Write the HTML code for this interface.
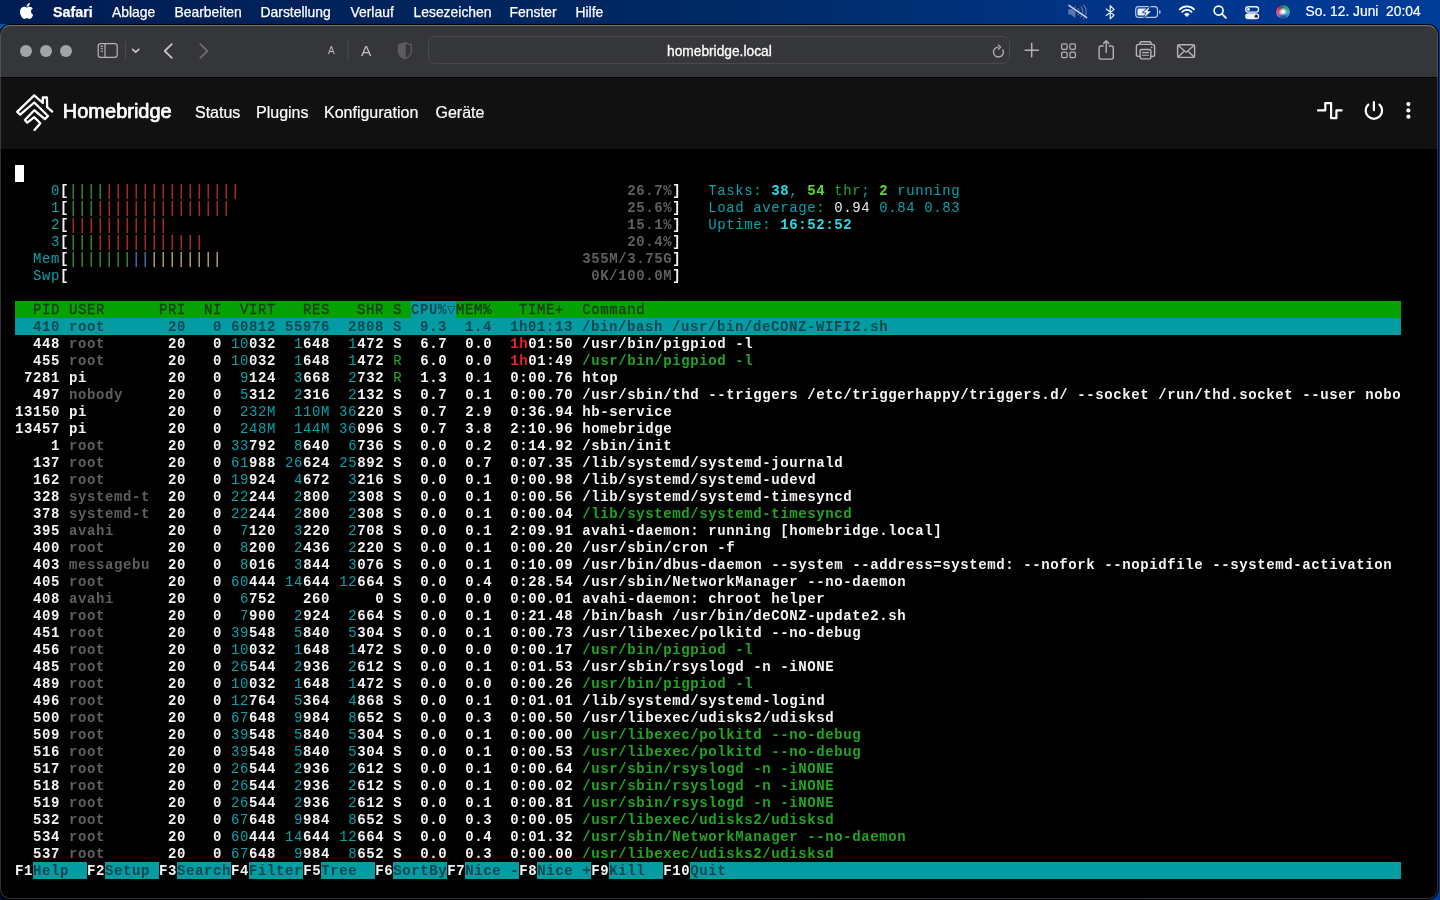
<!DOCTYPE html>
<html><head><meta charset="utf-8">
<style>
*{box-sizing:border-box}
html,body{margin:0;padding:0}
body{width:1440px;height:900px;overflow:hidden;position:relative;will-change:transform;background:linear-gradient(90deg,#001d54 0%,#00245c 30%,#002a64 50%,#00358a 80%,#003c98 100%);font-family:"Liberation Sans",sans-serif}
.mb{position:absolute;top:0;left:0;width:1440px;height:24px;color:#fff}
.mi{position:absolute;top:3.5px;font-size:13.9px;line-height:16px;white-space:nowrap;color:#fff;-webkit-text-stroke:.25px #fff}
.win{position:absolute;left:0;top:25px;width:1438px;height:874px;border-radius:10px;background:#000;overflow:hidden;box-shadow:0 0 0 1px rgba(0,0,0,.9)}
.winb{position:absolute;left:0;top:25px;width:1438px;height:874px;border-radius:10px;border:1px solid rgba(120,120,124,.42);border-top-color:rgba(160,160,164,.6);pointer-events:none}
.tb{position:absolute;left:0;top:0;width:1438px;height:53px;background:#35363a;border-bottom:1px solid #050505}
.nav{position:absolute;left:0;top:53px;width:1438px;height:71px;background:#111}
.ab{position:absolute;left:428px;top:11px;width:582px;height:28px;border:1px solid #4a4a4e;border-radius:7px;background:#36373b}
.nt{position:absolute;font-size:16px;line-height:19px;color:#fff;white-space:nowrap;-webkit-text-stroke:.2px #fff}
.term{position:absolute;left:15px;top:141px;font-family:"Liberation Mono",monospace;font-size:14px;letter-spacing:.6px;line-height:17px;white-space:pre;color:#f2f2f2}
.term div{height:17px}
.w{color:#f4f4f4;font-weight:bold}
.W{color:#ededed}
.c{color:#06a3ab}
.C{color:#2fd8e2;font-weight:bold}
.g{color:#22a822}
.gt{color:#20a620;font-weight:bold}
.G{color:#5fd83a;font-weight:bold}
.k{color:#5f5f5f;font-weight:bold}
.r{color:#e8231f;font-weight:bold}
.bg,.br,.bb,.by{display:inline-block;transform:scaleY(1.16)}.bg{color:#3caa3c}.br{color:#d63434}.bb{color:#5a82d0}.by{color:#d8c070}
.hg{color:#163f16;-webkit-text-stroke:.35px #163f16}
.hc{color:#0c4951;font-weight:bold}
.cur{background:#fff}
</style></head><body>
<div style="position:absolute;left:0;top:24px;width:14px;height:14px;background:radial-gradient(circle at 0 40%,#0b5ab0 0,#0a4a9a 50%,#062a6a 100%)"></div>
<div style="position:absolute;left:0;top:884px;width:14px;height:16px;background:#030c26"></div>
<div class="mb">
<svg style="position:absolute;left:20px;top:3px" width="12.8" height="16" viewBox="4 32 365 448" preserveAspectRatio="none"><path fill="#fff" d="M318.7 268.7c-.2-36.7 16.4-64.4 50-84.8-18.8-26.9-47.2-41.7-84.7-44.6-35.5-2.8-74.3 20.7-88.5 20.7-15 0-49.4-19.7-76.4-19.7C63.3 141.2 4 184.8 4 273.5q0 39.3 14.4 81.2c12.8 36.7 59 126.7 107.2 125.2 25.2-.6 43-17.9 75.8-17.9 31.8 0 48.3 17.9 76.4 17.9 48.6-.7 90.4-82.5 102.6-119.3-65.2-30.7-61.7-90-61.7-91.9zm-56.6-164.2c27.3-32.4 24.8-61.9 24-72.5-24.1 1.4-52 16.4-67.9 34.9-17.5 19.8-27.8 44.3-25.6 71.9 26.1 2 49.9-11.4 69.5-34.3z"/></svg>
<span class="mi" style="left:53px;font-weight:bold;font-size:14.3px;top:3.5px">Safari</span>
<span class="mi" style="left:112px">Ablage</span>
<span class="mi" style="left:174.5px">Bearbeiten</span>
<span class="mi" style="left:260.5px">Darstellung</span>
<span class="mi" style="left:350.5px">Verlauf</span>
<span class="mi" style="left:413.5px">Lesezeichen</span>
<span class="mi" style="left:509.5px">Fenster</span>
<span class="mi" style="left:575.5px">Hilfe</span>
<!-- muted speaker -->
<svg style="position:absolute;left:1060px;top:0" width="60" height="24" viewBox="1060 0 60 24"><path d="M1068.2 9.3h2.6l4.6-3.6v12.4l-4.6-3.6h-2.6z" fill="#5b78ae"/><path d="M1078.2 8.6c.7.9 1 1.9 1 3.1s-.3 2.2-1 3.1M1081 6.9c1.2 1.4 1.8 3 1.8 4.9s-.6 3.5-1.8 4.9M1083.7 5.2c1.7 1.9 2.6 4.1 2.6 6.6s-.9 4.7-2.6 6.6" stroke="#5877b0" stroke-width="1.2" fill="none" stroke-linecap="round"/><path d="M1069 5.4l17.6 12.2" stroke="#2a4a8a" stroke-width="2.6" stroke-linecap="round"/><path d="M1069 5.4l17.6 12.2" stroke="#dfe7f5" stroke-width="1.2" stroke-linecap="round"/>
<!-- bluetooth -->
<path d="M1106.3 9.1L1114 15.2 1110.2 18.9V5.7L1114 9.4 1106.3 15.4" stroke="#e6ecf8" stroke-width="1.25" fill="none" stroke-linejoin="round" stroke-linecap="round"/></svg>
<!-- battery -->
<svg style="position:absolute;left:1130px;top:0" width="70" height="24" viewBox="1130 0 70 24">
<rect x="1135.7" y="6.6" width="21.8" height="10.8" rx="2.9" stroke="#b9c8ec" stroke-width="1.15" fill="none"/>
<rect x="1137.5" y="8.4" width="9.5" height="7.2" rx="1.3" fill="#eceff8"/>
<rect x="1159" y="10.3" width="1.6" height="3.8" rx=".8" fill="#9db2e0"/>
<path d="M1149.9 6.4L1142.9 12.5H1146.5L1144.2 17.8 1151 11.3H1147.4Z" fill="#eceff8" stroke="#033a92" stroke-width="1.5" stroke-linejoin="round" paint-order="stroke"/>
<!-- wifi -->
<g stroke="#fff" stroke-width="1.8" fill="none" stroke-linecap="round">
<path d="M1179.7 9.4A10.2 10.2 0 0 1 1194.1 9.4"/>
<path d="M1182.2 11.9A6.6 6.6 0 0 1 1191.6 11.9"/>
</g>
<path d="M1186.9 16.6L1184.6 14.3A3.25 3.25 0 0 1 1189.2 14.3Z" fill="#fff" stroke="#fff" stroke-width=".9" stroke-linejoin="round"/>
</svg>
<!-- search -->
<svg style="position:absolute;left:1213px;top:4.5px" width="14" height="14" viewBox="0 0 14 14"><circle cx="5.6" cy="5.6" r="4.5" stroke="#fff" stroke-width="1.6" fill="none"/><path d="M8.9 8.9l4 4" stroke="#fff" stroke-width="1.8" stroke-linecap="round"/></svg>
<!-- control center -->
<svg style="position:absolute;left:1244.6px;top:5.6px" width="15" height="14" viewBox="0 0 15 14"><rect x=".75" y=".75" width="12.8" height="5.3" rx="2.65" stroke="#eef3ff" stroke-width="1.3" fill="none"/><circle cx="3.5" cy="3.4" r="1.35" fill="#fff"/><rect x=".1" y="7.2" width="14.1" height="6" rx="3" fill="#eef2fa"/><circle cx="11.2" cy="10.2" r="1.6" fill="#06245e"/></svg>
<!-- siri -->
<div style="position:absolute;left:1276.3px;top:4.9px;width:14px;height:14px;border-radius:50%;background:radial-gradient(circle at 50% 48%,#fff 0,rgba(240,250,255,.95) 14%,rgba(255,255,255,0) 42%),conic-gradient(from 0deg,#1f8a6a 0deg,#23a888 50deg,#3fb0c8 95deg,#3a8ad8 125deg,#1d4f8a 165deg,#2a5a9a 200deg,#8a6ac8 228deg,#d05a9a 262deg,#e04a7a 290deg,#a02a5a 325deg,#1f7a6a 358deg);box-shadow:0 0 0 .6px rgba(0,20,60,.6)"></div>
<span class="mi" style="left:1305.5px;top:4px;font-size:13.8px;-webkit-text-stroke:.2px #fff">So. 12. Juni&nbsp; 20:04</span>
</div>
<div class="win">
<div class="tb">
<svg style="position:absolute;left:0;top:-1px" width="1438" height="53">
<g fill="#a3a4a9"><circle cx="26" cy="27" r="6"/><circle cx="46" cy="27" r="6"/><circle cx="66" cy="27" r="6"/></g>
<g stroke="#b4b4b6" fill="none" stroke-width="1.2">
<rect x="98.2" y="19.7" width="19" height="13.6" rx="2.6"/>
<path d="M105 19.7v13.6"/>
</g>
<g stroke="#b4b4b6" stroke-width="1.1"><path d="M100.6 22.4h2.4M100.6 24.8h2.4M100.6 27.2h2.4"/></g>
<path d="M125.5 17.8v18.2" stroke="#4a4b4f" stroke-width="1"/>
<path d="M132.6 25.4l3.1 2.8 3.1-2.8" stroke="#c8c8ca" stroke-width="1.7" fill="none" stroke-linecap="round" stroke-linejoin="round"/>
<path d="M171.8 20.1L164.7 27l7.1 6.9" stroke="#c4c4c6" stroke-width="1.8" fill="none" stroke-linecap="round" stroke-linejoin="round"/>
<path d="M200.3 20.1L207.4 27l-7.1 6.9" stroke="#6c6c70" stroke-width="1.8" fill="none" stroke-linecap="round" stroke-linejoin="round"/>
<path d="M348 17v19" stroke="#4c4c50" stroke-width="1"/>
<path d="M405 18.9C407.5 19.9 409.6 20.5 411.4 20.7V26.2C411.4 30.6 408.7 33.3 405 34.6C401.3 33.3 398.6 30.6 398.6 26.2V20.7C400.4 20.5 402.5 19.9 405 18.9Z" fill="none" stroke="#5c5d61" stroke-width="1.4" stroke-linejoin="round"/>
<path d="M405 18.9C402.5 19.9 400.4 20.5 398.6 20.7V26.2C398.6 30.6 401.3 33.3 405 34.6Z" fill="#5c5d61" stroke="#5c5d61" stroke-width="1.4" stroke-linejoin="round"/>
</svg>
<span style="position:absolute;left:328px;top:20px;font-size:10px;line-height:12px;color:#bdbdbf">A</span>
<span style="position:absolute;left:361px;top:17px;font-size:15.5px;line-height:18px;color:#bdbdbf">A</span>
<div class="ab"></div>
<span style="position:absolute;left:667px;top:18.5px;font-size:13.75px;line-height:16px;color:#fff;-webkit-text-stroke:.3px #fff;white-space:nowrap">homebridge.local</span>
<svg style="position:absolute;left:0;top:-1px" width="1438" height="53">
<g stroke="#b4b4b6" fill="none" stroke-width="1.4" stroke-linecap="round" stroke-linejoin="round">
<path d="M997.9 23.1A4.95 4.95 0 1 0 1002.9 25.9" stroke-width="1.3"/>
<path d="M998.4 20.9l2.2 2.2-2.2 2.2" stroke-width="1.3"/>
<path d="M1031.7 19.6v13.2M1025.1 26.2h13.2" stroke-width="1.5"/>
<g stroke-width="1.25"><rect x="1061.6" y="19.9" width="5.5" height="5.5" rx="1.3"/><rect x="1069.9" y="19.9" width="5.5" height="5.5" rx="1.3"/>
<rect x="1061.6" y="28.1" width="5.5" height="5.5" rx="1.3"/><rect x="1069.9" y="28.1" width="5.5" height="5.5" rx="1.3"/></g>
<path d="M1103.2 22h-2.3a1.8 1.8 0 0 0-1.8 1.8v9.5a1.8 1.8 0 0 0 1.8 1.8h10.6a1.8 1.8 0 0 0 1.8-1.8v-9.5a1.8 1.8 0 0 0-1.8-1.8h-2.3"/>
<path d="M1106.2 28.4V16.9M1103.5 19.5l2.7-2.7 2.7 2.7"/>
<path d="M1139.8 20.4v-.9a1.8 1.8 0 0 1 1.8-1.8h7.8a1.8 1.8 0 0 1 1.8 1.8v.9"/>
<path d="M1139.7 32.4h-1.3a2 2 0 0 1-2-2v-7.8a2.2 2.2 0 0 1 2.2-2.2h13.8a2.2 2.2 0 0 1 2.2 2.2v7.8a2 2 0 0 1-2 2h-1.3"/>
<rect x="1140.1" y="25.5" width="10.8" height="9.4" rx="1.6"/>
<path d="M1142.4 28.6h6.2M1142.4 31.3h6.2" stroke-width="1.1"/>
<rect x="1177.6" y="20.7" width="17" height="12.7" rx="2"/>
<path d="M1177.9 21.3l8.2 6.9 8.2-6.9M1178.1 32.9l5.4-5.1M1194.1 32.9l-5.4-5.1"/>
</g>
<circle cx="1151.6" cy="23.3" r=".85" fill="#b4b4b6"/>
</svg>
</div>
<div class="nav">
<svg style="position:absolute;left:0;top:0" width="60" height="71" viewBox="0 78 60 71">
<path d="M34.5 130L40.4 123.2 34.25 117.2 27.3 122.6 24.9 120 34.25 110.2 44.9 119.1 48 116 34.25 102.5 20.2 114.6 17.2 111.8 34.25 95.3 42.8 103 42.8 97.5 46.9 97.5 47.2 107.2 52.2 111.6" stroke="#fff" stroke-width="2.3" fill="none" stroke-linejoin="round" stroke-linecap="round"/>
</svg>
<span style="position:absolute;left:62.8px;top:21px;font-size:20px;line-height:24px;color:#fff;-webkit-text-stroke:.7px #fff;white-space:nowrap">Homebridge</span>
<span class="nt" style="left:195px;top:25px">Status</span>
<span class="nt" style="left:256px;top:25px">Plugins</span>
<span class="nt" style="left:324px;top:25px">Konfiguration</span>
<span class="nt" style="left:435.5px;top:25px">Geräte</span>
<svg style="position:absolute;left:1300px;top:0" width="138" height="71" viewBox="1300 78 138 71">
<g stroke="#fff" stroke-width="2.2" fill="none" stroke-linejoin="round" stroke-linecap="round">
<path d="M1318 110.4h7.3v-7.3h5.8v15.1h5.3v-7.8h5.2"/>
<path d="M1368.3 104.6a8.2 8.2 0 1 0 11.2 0" stroke-linecap="round"/>
<path d="M1373.9 102v8.2" stroke-linecap="round"/>
</g>
<g fill="#fff"><circle cx="1408.4" cy="104.1" r="2.1"/><circle cx="1408.4" cy="110.4" r="2.1"/><circle cx="1408.4" cy="116.7" r="2.1"/></g>
</svg>
</div>
<div style="position:absolute;left:15px;top:140px;width:9px;height:17px;background:#fff"></div><div style="position:absolute;left:15px;top:276px;width:1386px;height:17px;background:#05a105"></div><div style="position:absolute;left:411px;top:276px;width:45px;height:17px;background:#039ca2"></div><div style="position:absolute;left:15px;top:293px;width:1386px;height:17px;background:#039ca2"></div><div style="position:absolute;left:33px;top:837px;width:54px;height:17px;background:#039ca2"></div><div style="position:absolute;left:105px;top:837px;width:54px;height:17px;background:#039ca2"></div><div style="position:absolute;left:177px;top:837px;width:54px;height:17px;background:#039ca2"></div><div style="position:absolute;left:249px;top:837px;width:54px;height:17px;background:#039ca2"></div><div style="position:absolute;left:321px;top:837px;width:54px;height:17px;background:#039ca2"></div><div style="position:absolute;left:393px;top:837px;width:54px;height:17px;background:#039ca2"></div><div style="position:absolute;left:465px;top:837px;width:54px;height:17px;background:#039ca2"></div><div style="position:absolute;left:537px;top:837px;width:54px;height:17px;background:#039ca2"></div><div style="position:absolute;left:609px;top:837px;width:54px;height:17px;background:#039ca2"></div><div style="position:absolute;left:690px;top:837px;width:711px;height:17px;background:#039ca2"></div><div class="term"><div></div><div><span class="c">    0</span><span class="w">[</span><span class="bg">||||</span><span class="br">|||||||||||||||</span>                                           <span class="k">26.7%</span><span class="w">]</span>   <span class="c">Tasks: </span><span class="C">38</span><span class="c">, </span><span class="G">54</span><span class="g"> thr</span><span class="c">; </span><span class="G">2</span><span class="c"> running</span></div><div><span class="c">    1</span><span class="w">[</span><span class="bg">|||</span><span class="br">|||||||||||||||</span>                                            <span class="k">25.6%</span><span class="w">]</span>   <span class="c">Load average: </span><span class="W">0.94 </span><span class="c">0.84 </span><span class="c">0.83 </span></div><div><span class="c">    2</span><span class="w">[</span><span class="br">|||||||||||</span>                                                   <span class="k">15.1%</span><span class="w">]</span>   <span class="c">Uptime: </span><span class="C">16:52:52</span></div><div><span class="c">    3</span><span class="w">[</span><span class="bg">|||</span><span class="br">||||||||||||</span>                                               <span class="k">20.4%</span><span class="w">]</span>   </div><div><span class="c">  Mem</span><span class="w">[</span><span class="bg">|||||||</span><span class="bb">||</span><span class="by">||||||||</span>                                        <span class="k">355M/3.75G</span><span class="w">]</span>   </div><div><span class="c">  Swp</span><span class="w">[</span>                                                          <span class="k">0K/100.0M</span><span class="w">]</span>   </div><div></div><div><span class="hg">  PID USER      PRI  NI  VIRT   RES   SHR S </span><span class="hc">CPU%▽</span><span class="hg">MEM%   TIME+  Command                                                                                    </span></div><div><span class="hc">  410 root       20   0 60812 55976  2808 S  9.3  1.4  1h01:13 /bin/bash /usr/bin/deCONZ-WIFI2.sh                                                         </span></div><div><span class="w">  448 </span><span class="k">root     </span><span class="w">  20   0 </span><span class="c">10</span><span class="w">032</span>  <span class="c">1</span><span class="w">648</span>  <span class="c">1</span><span class="w">472</span> <span class="w">S</span><span class="w">  6.7  0.0 </span> <span class="r">1h</span><span class="w">01:50 </span><span class="w">/usr/bin/pigpiod -l</span></div><div><span class="w">  455 </span><span class="k">root     </span><span class="w">  20   0 </span><span class="c">10</span><span class="w">032</span>  <span class="c">1</span><span class="w">648</span>  <span class="c">1</span><span class="w">472</span> <span class="g">R</span><span class="w">  6.0  0.0 </span> <span class="r">1h</span><span class="w">01:49 </span><span class="gt">/usr/bin/pigpiod -l</span></div><div><span class="w"> 7281 </span><span class="w">pi       </span><span class="w">  20   0 </span> <span class="c">9</span><span class="w">124</span>  <span class="c">3</span><span class="w">668</span>  <span class="c">2</span><span class="w">732</span> <span class="g">R</span><span class="w">  1.3  0.1 </span><span class="w"> 0:00.76 </span><span class="w">htop</span></div><div><span class="w">  497 </span><span class="k">nobody   </span><span class="w">  20   0 </span> <span class="c">5</span><span class="w">312</span>  <span class="c">2</span><span class="w">316</span>  <span class="c">2</span><span class="w">132</span> <span class="w">S</span><span class="w">  0.7  0.1 </span><span class="w"> 0:00.70 </span><span class="w">/usr/sbin/thd --triggers /etc/triggerhappy/triggers.d/ --socket /run/thd.socket --user nobo</span></div><div><span class="w">13150 </span><span class="w">pi       </span><span class="w">  20   0 </span><span class="c"> 232M</span> <span class="c"> 110M</span> <span class="c">36</span><span class="w">220</span> <span class="w">S</span><span class="w">  0.7  2.9 </span><span class="w"> 0:36.94 </span><span class="w">hb-service</span></div><div><span class="w">13457 </span><span class="w">pi       </span><span class="w">  20   0 </span><span class="c"> 248M</span> <span class="c"> 144M</span> <span class="c">36</span><span class="w">096</span> <span class="w">S</span><span class="w">  0.7  3.8 </span><span class="w"> 2:10.96 </span><span class="w">homebridge</span></div><div><span class="w">    1 </span><span class="k">root     </span><span class="w">  20   0 </span><span class="c">33</span><span class="w">792</span>  <span class="c">8</span><span class="w">640</span>  <span class="c">6</span><span class="w">736</span> <span class="w">S</span><span class="w">  0.0  0.2 </span><span class="w"> 0:14.92 </span><span class="w">/sbin/init</span></div><div><span class="w">  137 </span><span class="k">root     </span><span class="w">  20   0 </span><span class="c">61</span><span class="w">988</span> <span class="c">26</span><span class="w">624</span> <span class="c">25</span><span class="w">892</span> <span class="w">S</span><span class="w">  0.0  0.7 </span><span class="w"> 0:07.35 </span><span class="w">/lib/systemd/systemd-journald</span></div><div><span class="w">  162 </span><span class="k">root     </span><span class="w">  20   0 </span><span class="c">19</span><span class="w">924</span>  <span class="c">4</span><span class="w">672</span>  <span class="c">3</span><span class="w">216</span> <span class="w">S</span><span class="w">  0.0  0.1 </span><span class="w"> 0:00.98 </span><span class="w">/lib/systemd/systemd-udevd</span></div><div><span class="w">  328 </span><span class="k">systemd-t</span><span class="w">  20   0 </span><span class="c">22</span><span class="w">244</span>  <span class="c">2</span><span class="w">800</span>  <span class="c">2</span><span class="w">308</span> <span class="w">S</span><span class="w">  0.0  0.1 </span><span class="w"> 0:00.56 </span><span class="w">/lib/systemd/systemd-timesyncd</span></div><div><span class="w">  378 </span><span class="k">systemd-t</span><span class="w">  20   0 </span><span class="c">22</span><span class="w">244</span>  <span class="c">2</span><span class="w">800</span>  <span class="c">2</span><span class="w">308</span> <span class="w">S</span><span class="w">  0.0  0.1 </span><span class="w"> 0:00.04 </span><span class="gt">/lib/systemd/systemd-timesyncd</span></div><div><span class="w">  395 </span><span class="k">avahi    </span><span class="w">  20   0 </span> <span class="c">7</span><span class="w">120</span>  <span class="c">3</span><span class="w">220</span>  <span class="c">2</span><span class="w">708</span> <span class="w">S</span><span class="w">  0.0  0.1 </span><span class="w"> 2:09.91 </span><span class="w">avahi-daemon: running [homebridge.local]</span></div><div><span class="w">  400 </span><span class="k">root     </span><span class="w">  20   0 </span> <span class="c">8</span><span class="w">200</span>  <span class="c">2</span><span class="w">436</span>  <span class="c">2</span><span class="w">220</span> <span class="w">S</span><span class="w">  0.0  0.1 </span><span class="w"> 0:00.20 </span><span class="w">/usr/sbin/cron -f</span></div><div><span class="w">  403 </span><span class="k">messagebu</span><span class="w">  20   0 </span> <span class="c">8</span><span class="w">016</span>  <span class="c">3</span><span class="w">844</span>  <span class="c">3</span><span class="w">076</span> <span class="w">S</span><span class="w">  0.0  0.1 </span><span class="w"> 0:10.09 </span><span class="w">/usr/bin/dbus-daemon --system --address=systemd: --nofork --nopidfile --systemd-activation</span></div><div><span class="w">  405 </span><span class="k">root     </span><span class="w">  20   0 </span><span class="c">60</span><span class="w">444</span> <span class="c">14</span><span class="w">644</span> <span class="c">12</span><span class="w">664</span> <span class="w">S</span><span class="w">  0.0  0.4 </span><span class="w"> 0:28.54 </span><span class="w">/usr/sbin/NetworkManager --no-daemon</span></div><div><span class="w">  408 </span><span class="k">avahi    </span><span class="w">  20   0 </span> <span class="c">6</span><span class="w">752</span> <span class="w">  260</span> <span class="w">    0</span> <span class="w">S</span><span class="w">  0.0  0.0 </span><span class="w"> 0:00.01 </span><span class="w">avahi-daemon: chroot helper</span></div><div><span class="w">  409 </span><span class="k">root     </span><span class="w">  20   0 </span> <span class="c">7</span><span class="w">900</span>  <span class="c">2</span><span class="w">924</span>  <span class="c">2</span><span class="w">664</span> <span class="w">S</span><span class="w">  0.0  0.1 </span><span class="w"> 0:21.48 </span><span class="w">/bin/bash /usr/bin/deCONZ-update2.sh</span></div><div><span class="w">  451 </span><span class="k">root     </span><span class="w">  20   0 </span><span class="c">39</span><span class="w">548</span>  <span class="c">5</span><span class="w">840</span>  <span class="c">5</span><span class="w">304</span> <span class="w">S</span><span class="w">  0.0  0.1 </span><span class="w"> 0:00.73 </span><span class="w">/usr/libexec/polkitd --no-debug</span></div><div><span class="w">  456 </span><span class="k">root     </span><span class="w">  20   0 </span><span class="c">10</span><span class="w">032</span>  <span class="c">1</span><span class="w">648</span>  <span class="c">1</span><span class="w">472</span> <span class="w">S</span><span class="w">  0.0  0.0 </span><span class="w"> 0:00.17 </span><span class="gt">/usr/bin/pigpiod -l</span></div><div><span class="w">  485 </span><span class="k">root     </span><span class="w">  20   0 </span><span class="c">26</span><span class="w">544</span>  <span class="c">2</span><span class="w">936</span>  <span class="c">2</span><span class="w">612</span> <span class="w">S</span><span class="w">  0.0  0.1 </span><span class="w"> 0:01.53 </span><span class="w">/usr/sbin/rsyslogd -n -iNONE</span></div><div><span class="w">  489 </span><span class="k">root     </span><span class="w">  20   0 </span><span class="c">10</span><span class="w">032</span>  <span class="c">1</span><span class="w">648</span>  <span class="c">1</span><span class="w">472</span> <span class="w">S</span><span class="w">  0.0  0.0 </span><span class="w"> 0:00.26 </span><span class="gt">/usr/bin/pigpiod -l</span></div><div><span class="w">  496 </span><span class="k">root     </span><span class="w">  20   0 </span><span class="c">12</span><span class="w">764</span>  <span class="c">5</span><span class="w">364</span>  <span class="c">4</span><span class="w">868</span> <span class="w">S</span><span class="w">  0.0  0.1 </span><span class="w"> 0:01.01 </span><span class="w">/lib/systemd/systemd-logind</span></div><div><span class="w">  500 </span><span class="k">root     </span><span class="w">  20   0 </span><span class="c">67</span><span class="w">648</span>  <span class="c">9</span><span class="w">984</span>  <span class="c">8</span><span class="w">652</span> <span class="w">S</span><span class="w">  0.0  0.3 </span><span class="w"> 0:00.50 </span><span class="w">/usr/libexec/udisks2/udisksd</span></div><div><span class="w">  509 </span><span class="k">root     </span><span class="w">  20   0 </span><span class="c">39</span><span class="w">548</span>  <span class="c">5</span><span class="w">840</span>  <span class="c">5</span><span class="w">304</span> <span class="w">S</span><span class="w">  0.0  0.1 </span><span class="w"> 0:00.00 </span><span class="gt">/usr/libexec/polkitd --no-debug</span></div><div><span class="w">  516 </span><span class="k">root     </span><span class="w">  20   0 </span><span class="c">39</span><span class="w">548</span>  <span class="c">5</span><span class="w">840</span>  <span class="c">5</span><span class="w">304</span> <span class="w">S</span><span class="w">  0.0  0.1 </span><span class="w"> 0:00.53 </span><span class="gt">/usr/libexec/polkitd --no-debug</span></div><div><span class="w">  517 </span><span class="k">root     </span><span class="w">  20   0 </span><span class="c">26</span><span class="w">544</span>  <span class="c">2</span><span class="w">936</span>  <span class="c">2</span><span class="w">612</span> <span class="w">S</span><span class="w">  0.0  0.1 </span><span class="w"> 0:00.64 </span><span class="gt">/usr/sbin/rsyslogd -n -iNONE</span></div><div><span class="w">  518 </span><span class="k">root     </span><span class="w">  20   0 </span><span class="c">26</span><span class="w">544</span>  <span class="c">2</span><span class="w">936</span>  <span class="c">2</span><span class="w">612</span> <span class="w">S</span><span class="w">  0.0  0.1 </span><span class="w"> 0:00.02 </span><span class="gt">/usr/sbin/rsyslogd -n -iNONE</span></div><div><span class="w">  519 </span><span class="k">root     </span><span class="w">  20   0 </span><span class="c">26</span><span class="w">544</span>  <span class="c">2</span><span class="w">936</span>  <span class="c">2</span><span class="w">612</span> <span class="w">S</span><span class="w">  0.0  0.1 </span><span class="w"> 0:00.81 </span><span class="gt">/usr/sbin/rsyslogd -n -iNONE</span></div><div><span class="w">  532 </span><span class="k">root     </span><span class="w">  20   0 </span><span class="c">67</span><span class="w">648</span>  <span class="c">9</span><span class="w">984</span>  <span class="c">8</span><span class="w">652</span> <span class="w">S</span><span class="w">  0.0  0.3 </span><span class="w"> 0:00.05 </span><span class="gt">/usr/libexec/udisks2/udisksd</span></div><div><span class="w">  534 </span><span class="k">root     </span><span class="w">  20   0 </span><span class="c">60</span><span class="w">444</span> <span class="c">14</span><span class="w">644</span> <span class="c">12</span><span class="w">664</span> <span class="w">S</span><span class="w">  0.0  0.4 </span><span class="w"> 0:01.32 </span><span class="gt">/usr/sbin/NetworkManager --no-daemon</span></div><div><span class="w">  537 </span><span class="k">root     </span><span class="w">  20   0 </span><span class="c">67</span><span class="w">648</span>  <span class="c">9</span><span class="w">984</span>  <span class="c">8</span><span class="w">652</span> <span class="w">S</span><span class="w">  0.0  0.3 </span><span class="w"> 0:00.00 </span><span class="gt">/usr/libexec/udisks2/udisksd</span></div><div><span class="w">F1</span><span class="hc">Help  </span><span class="w">F2</span><span class="hc">Setup </span><span class="w">F3</span><span class="hc">Search</span><span class="w">F4</span><span class="hc">Filter</span><span class="w">F5</span><span class="hc">Tree  </span><span class="w">F6</span><span class="hc">SortBy</span><span class="w">F7</span><span class="hc">Nice -</span><span class="w">F8</span><span class="hc">Nice +</span><span class="w">F9</span><span class="hc">Kill  </span><span class="w">F10</span><span class="hc">Quit                                                                           </span></div></div>
</div>
<div class="winb"></div>
</body></html>
